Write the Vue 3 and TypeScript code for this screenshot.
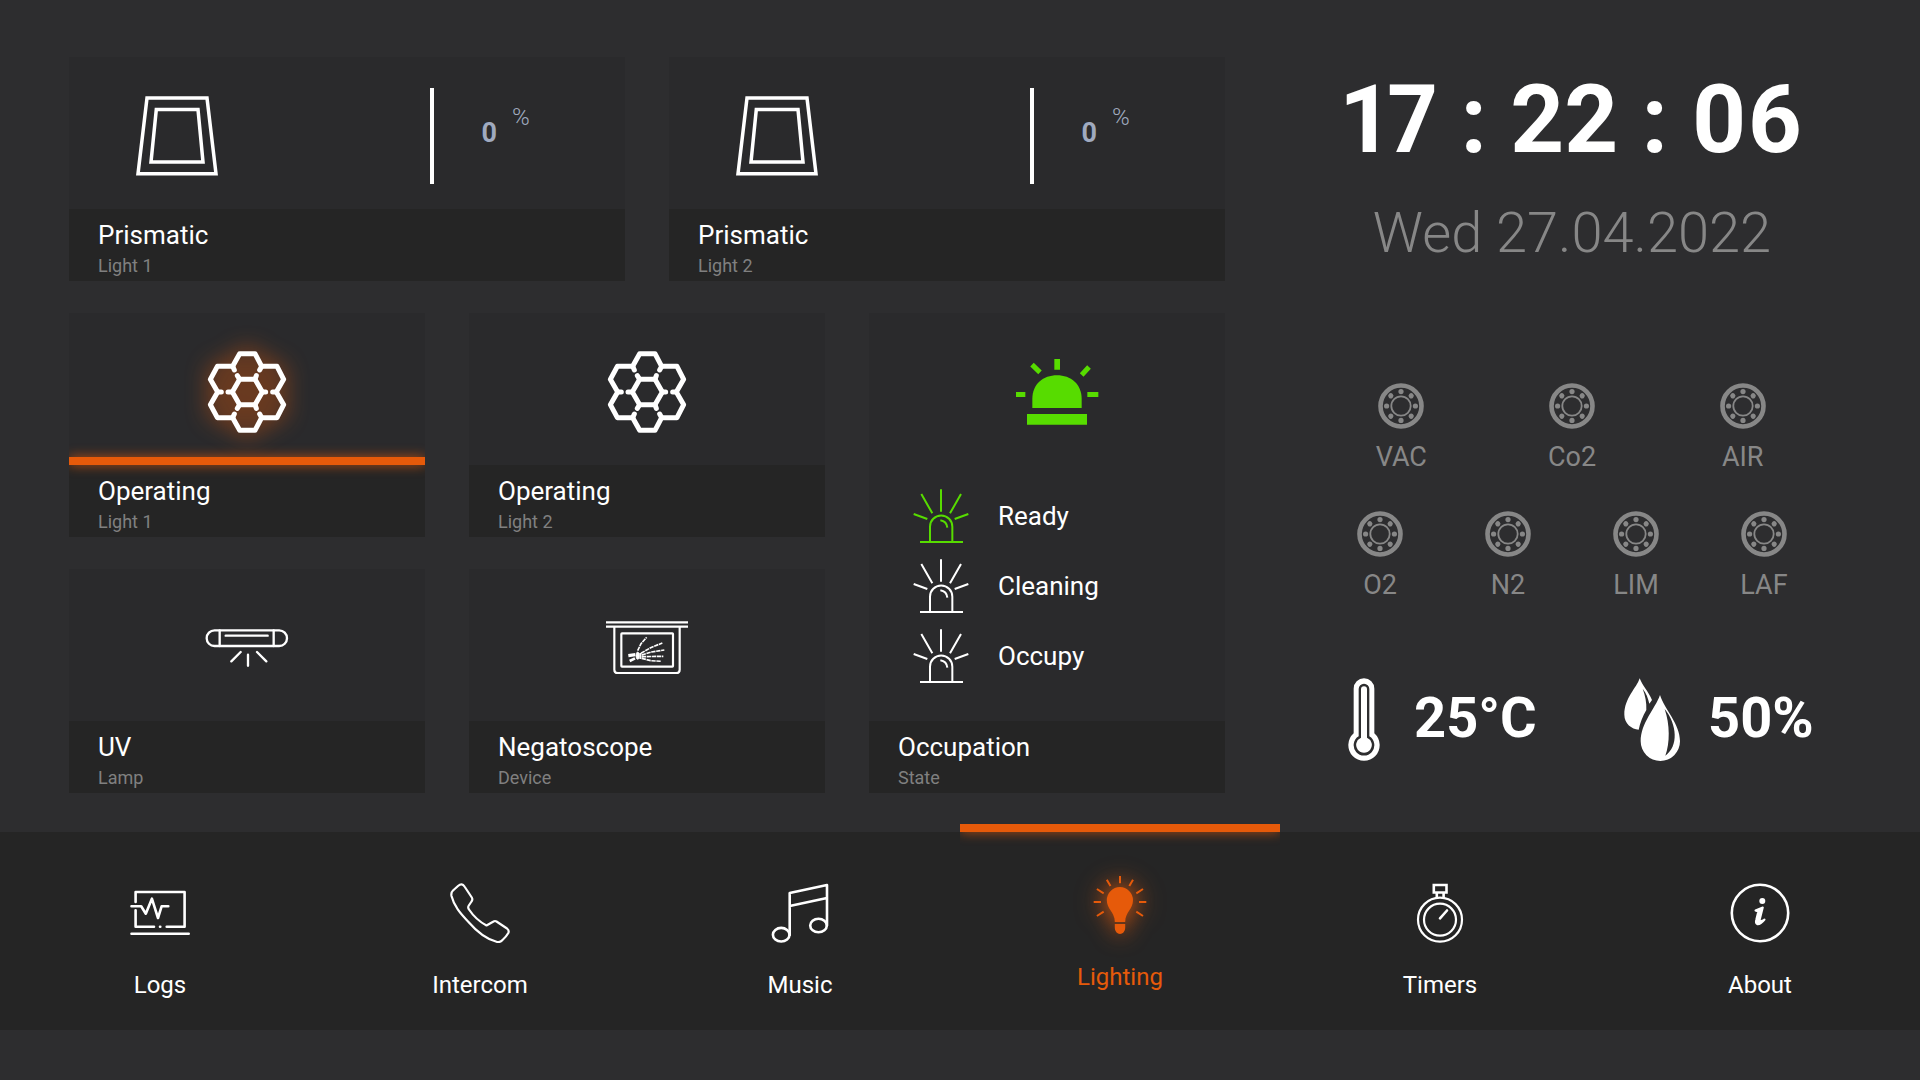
<script setup lang="ts">
import { ref } from 'vue'

interface PrismaticLight {
  name: string
  level: number
}

interface OperatingLight {
  name: string
  on: boolean
}

const prismatic: PrismaticLight[] = [
  { name: 'Light 1', level: 0 },
  { name: 'Light 2', level: 0 },
]

const operating = ref<OperatingLight[]>([
  { name: 'Light 1', on: true },
  { name: 'Light 2', on: false },
])

const states = ['Ready', 'Cleaning', 'Occupy']
const state = ref('Ready')

const gasRows = [
  ['VAC', 'Co2', 'AIR'],
  ['O2', 'N2', 'LIM', 'LAF'],
]
const boltAngles = [0, 45, 90, 135, 180, 225, 270, 315]

const pages = ['Logs', 'Intercom', 'Music', 'Lighting', 'Timers', 'About']
const page = ref('Lighting')
</script>

<template>
  <div class="panel">
    <main class="main">
      <section class="tiles" aria-label="Lighting controls">
        <article v-for="light in prismatic" :key="light.name" class="tile wide">
          <div class="hero dimmer">
            <svg class="icon" viewBox="75 54 84 84" fill="none" stroke="#fff" stroke-width="3.5">
              <path d="M87 58H147L156 133.8H78Z" />
              <path d="M96.3 69.5H138L143 122H91Z" />
            </svg>
            <span class="rail"></span>
            <p class="level"><b>{{ light.level }}</b><span>%</span></p>
          </div>
          <div class="label">
            <h2>Prismatic</h2>
            <p>{{ light.name }}</p>
          </div>
        </article>

        <button
          v-for="light in operating"
          :key="light.name"
          type="button"
          class="tile"
          :class="{ on: light.on }"
          :aria-pressed="light.on"
          @click="light.on = !light.on"
        >
          <span class="hero">
            <svg class="icon" viewBox="435 149 252 252" fill="none" stroke="#fff" stroke-width="15" stroke-linecap="round" stroke-linejoin="round">
              <path d="M539 237H585L607 275L585 313H539L517 275Z" />
              <path d="M518 198H472L451 237L473 275L451 313L472 352H518L539 390H585L605 352H651L671 313L649 275L671 237L651 198H605L585 160H539Z" />
              <path d="M518 198L523 209M605 198L599 209M473 275H484M649 275H638M518 352L523 341M605 352L599 341" />
              <path d="M539 237L532 226M585 237L589 226M517 275H504M607 275H617M539 313L532 324M585 313L589 324" />
            </svg>
          </span>
          <span class="label">
            <strong>Operating</strong>
            <small>{{ light.name }}</small>
          </span>
        </button>

        <article class="tile occupation">
          <div class="hero beacon">
            <svg class="icon" viewBox="465 150 252 252" fill="#57dc00">
              <path d="M517 324V297C517 252 550 226 591 226C632 226 665 252 665 297V324Z" />
              <path d="M501 342H681V374H501ZM583 177H600V209H583ZM468 276H496V291H468ZM682 276H715V291H682Z" />
              <path d="M516 194L540 217M687 201L665 225" stroke="#57dc00" stroke-width="15" />
            </svg>
          </div>
          <div class="states">
            <button
              v-for="item in states"
              :key="item"
              type="button"
              class="state"
              :class="{ current: item === state }"
              :aria-pressed="item === state"
              @click="state = item"
            >
              <svg viewBox="159 564 168 168" fill="none" stroke="currentColor" stroke-width="6">
                <path d="M243 568V635M184 582L217 640M303 582L270 640M161 642L202 657M325 642L284 657" />
                <path d="M210 726V680A33.500 33.500 0 0 1 277 680V726M180 726H309M241 661Q260 664 262 683" />
              </svg>
              <span>{{ item }}</span>
            </button>
          </div>
          <div class="label">
            <h2>Occupation</h2>
            <p>State</p>
          </div>
        </article>

        <button type="button" class="tile">
          <span class="hero">
            <svg class="icon" viewBox="436 138 252 252" fill="none" stroke="#fff" stroke-width="7" stroke-linecap="round">
              <rect x="441" y="211" width="241" height="47" rx="23.500" />
              <path d="M480 211V258M642 211V258M498 227H624M543 276L515 304M565 284V317M592 276L620 304" />
            </svg>
          </span>
          <span class="label">
            <strong>UV</strong>
            <small>Lamp</small>
          </span>
        </button>

        <button type="button" class="tile">
          <span class="hero">
            <svg class="icon" viewBox="435 138 252 252" fill="none" stroke="#fff" stroke-width="6.500">
              <path d="M438 187H684M438 200H684M463 202V329Q463 339 473 339H649Q659 339 659 329V202" />
              <rect x="484" y="220" width="155" height="100" rx="2" />
              <path d="M505 287L526 284" stroke-width="10" />
              <path d="M509 303L525 295" stroke-width="8" />
              <ellipse cx="533" cy="287" rx="5" ry="11" fill="#fff" stroke-width="2" />
              <path d="M541 279V297" stroke-width="6" />
              <path d="M533 272L543 251L560 232M543 280L572 263L607 249M545 285L575 276L613 270M545 290L610 289M545 295L572 302L604 304" stroke-width="5" stroke-dasharray="13 2" />
            </svg>
          </span>
          <span class="label">
            <strong>Negatoscope</strong>
            <small>Device</small>
          </span>
        </button>
      </section>

      <aside class="status">
        <time class="clock">17 : 22 : 06</time>
        <time class="date">Wed 27.04.2022</time>

        <div class="gases">
          <ul v-for="row in gasRows" :key="row[0]">
            <li v-for="gas in row" :key="gas">
              <svg viewBox="-23 -23 46 46" fill="none" stroke="#878787">
                <circle r="20.500" stroke-width="4.600" />
                <circle r="9.700" stroke-width="1.800" />
                <circle
                  v-for="angle in boltAngles"
                  :key="angle"
                  cy="-14.400"
                  r="2.600"
                  fill="#878787"
                  stroke="none"
                  :transform="`rotate(${angle})`"
                />
              </svg>
              <span>{{ gas }}</span>
            </li>
          </ul>
        </div>

        <div class="climate">
          <p class="temperature">
            <svg width="32" height="83" viewBox="84 85 96 249" fill="#fff" fill-rule="evenodd">
              <path d="M101 117A31 31 0 0 1 163 117V251A47 47 0 1 1 101 251ZM116 118A16 16 0 0 1 148 118V260A31 31 0 1 1 116 260ZM123 119A9 9 0 0 1 141 119V264A23.500 23.500 0 1 1 123 264Z" />
            </svg>
            <span>25°C</span>
          </p>
          <p class="humidity">
            <svg width="56" height="83" viewBox="912 85 168 249" fill="#fff" fill-rule="evenodd">
              <path d="M959 86C950 115 913 145 913 195C913 222 935 238 956 240C960 220 968 200 979 181C980 158 976 138 968 117C979 130 984 145 988 162L996 151C985 125 968 110 959 86Z" />
              <path d="M1020 136C1005 178 962 220 962 275A58.500 58.500 0 0 0 1080 275C1080 222 1034 180 1020 136ZM1034 178C1072 225 1076 290 1036 318C1050 280 1050 225 1034 178Z" />
            </svg>
            <span>50%</span>
          </p>
        </div>
      </aside>
    </main>

    <nav class="nav">
      <a
        v-for="item in pages"
        :key="item"
        :href="`#${item.toLowerCase()}`"
        :class="{ active: item === page }"
        :aria-current="item === page ? 'page' : undefined"
        @click.prevent="page = item"
      >
        <svg viewBox="0 0 60 60" fill="none" stroke="currentColor" stroke-width="2.600" stroke-linecap="round" stroke-linejoin="round">
          <template v-if="item === 'Logs'">
            <path d="M5.600 19V9H54.600V43.700H36.700M5.600 27.300V43.700H24M30 43.700H30.300M1.500 50.700H58.700" />
            <path d="M1.500 23.300H11.200L15.800 30.700L21.900 15.700L28 35L31.600 23.300H38.300" />
          </template>
          <path
            v-else-if="item === 'Intercom'"
            stroke-width="2.200"
            d="M8 3Q12 -.5 14.500 3.500L21.800 14.500Q23 16.500 21.500 18.500L18.800 22.500Q17.500 24.500 19 26.500C24 34 29 38.500 36.500 42.500L43.500 38.500Q45 37.500 46.500 38.500L57 45.500Q59.500 47.500 58.300 50Q56 54 52.500 57Q50 59.800 46.500 58.800C36 56 28 50 18.500 39C10 30 4 23 1.500 13Q.8 9.500 3 7.500Z"
          />
          <template v-else-if="item === 'Music'">
            <path d="M19.700 52V10L57 2V42.500M19.700 23L57 15" />
            <ellipse cx="11.200" cy="51.700" rx="8.300" ry="6.800" />
            <ellipse cx="48.500" cy="42.500" rx="8.300" ry="6.800" />
          </template>
          <template v-else-if="item === 'Lighting'">
            <path
              fill="currentColor"
              stroke="none"
              d="M24.800 47C24.800 37 16.800 34 16.800 25.200A13.100 13.100 0 0 1 43 25.200C43 34 35.200 37 35.200 47ZM24.800 49H35.200V53A5.200 6 0 0 1 24.800 53Z"
            />
            <path
              stroke-width="2"
              stroke-linecap="butt"
              d="M30 1V8.300M16.800 4.700L20.500 11M43 4.700L39.300 11M6.900 14L13.700 18.300M53 14L46.300 18.300M3.700 27H11M49 27H56.300M6.900 41L13.700 36.700M53 41L46.300 36.700"
            />
          </template>
          <template v-else-if="item === 'Timers'">
            <circle cx="30" cy="36.700" r="22" stroke-width="2.200" />
            <circle cx="30" cy="36.700" r="16" stroke-width="2.200" />
            <path stroke-linejoin="miter" d="M23.800 2H36.500V9.500H23.800ZM26.800 10V14.500M33.600 10V14.500M30 35.300L37 27.500" />
          </template>
          <template v-else>
            <circle cx="30" cy="30" r="28.200" />
            <circle cx="32.300" cy="18" r="3" fill="currentColor" stroke="none" />
            <path stroke-width="2" fill="currentColor" d="M25.500 27.500L32.800 24.500L29.500 37.500Q30 39 34.500 36.500Q30 42 27 41Q25.300 40 26.300 36.500L28.300 28.500Z" />
          </template>
        </svg>
        <span>{{ item }}</span>
      </a>
    </nav>
  </div>
</template>

<style>
body {
  background: #2d2d2f;
}
</style>

<style scoped>
.panel {
  color: #fff;
  font-family: Roboto, 'Liberation Sans', sans-serif;
}

h2,
p,
ul {
  margin: 0;
  padding: 0;
}

button {
  border: 0;
  padding: 0;
  background: none;
  color: inherit;
  font: inherit;
  text-align: left;
  cursor: pointer;
}

svg {
  display: block;
  flex: none;
}

.main {
  display: grid;
  grid-template-columns: 1156fr 512fr;
  column-gap: 91px;
  padding: 57px 92px 39px 69px;
}

/* Tiles */
.tiles {
  display: grid;
  grid-template-columns: repeat(6, 1fr);
  grid-auto-rows: 224px;
  gap: 32px 44px;
}

.tile {
  grid-column: span 2;
  display: flex;
  flex-direction: column;
  min-width: 0;
  overflow: hidden;
  background: #2a2a2c;
}

.tile.wide {
  grid-column: span 3;
}

.tile.occupation {
  grid-row: span 2;
}

.hero {
  display: flex;
  align-items: center;
  justify-content: center;
  box-sizing: border-box;
  width: 100%;
  height: 152px;
  padding-top: 6px;
}

.icon {
  width: 84px;
  height: 84px;
}

.on .hero {
  position: relative;
}

.on .hero::after {
  content: '';
  position: absolute;
  right: 0;
  bottom: 0;
  left: 0;
  height: 8px;
  background: #e65a0a;
  box-shadow: 0 0 12px rgba(230, 90, 10, 0.8);
}

.on .icon {
  filter: drop-shadow(0 0 11px #e65a0a);
}

.dimmer {
  display: grid;
  grid-template-columns: 65% 4px 1fr;
}

.dimmer .icon {
  margin-left: 66px;
}

.rail {
  height: 96px;
  background: #fff;
}

.level {
  display: flex;
  align-items: flex-start;
  gap: 15px;
  margin: 0 0 18px 47px;
  color: #a0aabf;
}

.level b {
  padding-top: 12px;
  font-size: 27px;
  line-height: 32px;
}

.level span {
  font-size: 24px;
  font-weight: 300;
  line-height: 24px;
}

.label {
  display: flex;
  flex-direction: column;
  gap: 3px;
  box-sizing: border-box;
  width: 100%;
  height: 72px;
  margin-top: auto;
  padding: 10px 29px 0;
  background: #252525;
}

.label h2,
.label strong {
  font-size: 26px;
  font-weight: 400;
  line-height: 32px;
}

.label p,
.label small {
  color: #808080;
  font-size: 18px;
  line-height: 24px;
}

.beacon {
  padding-left: 20px;
}

.states {
  display: flex;
  flex-direction: column;
  margin-top: 16px;
  padding-left: 44px;
}

.state {
  display: flex;
  align-items: center;
  gap: 29px;
  height: 70px;
  font-size: 26px;
  line-height: 32px;
}

.state svg {
  width: 56px;
  height: 56px;
}

.current svg {
  color: #57dc00;
}

/* Status column */
.status {
  display: flex;
  flex-direction: column;
  padding-top: 15px;
}

.clock {
  font-size: 94px;
  font-weight: 700;
  font-variant-numeric: proportional-nums;
  line-height: 96px;
  text-align: center;
  white-space: nowrap;
}

.date {
  margin-top: 33px;
  color: #878787;
  font-size: 56px;
  font-weight: 300;
  line-height: 64px;
  text-align: center;
  white-space: nowrap;
}

.gases {
  display: grid;
  gap: 38px;
  margin-top: 118px;
  color: #878787;
}

.gases ul {
  display: flex;
  list-style: none;
}

.gases li {
  flex: 1;
  display: flex;
  flex-direction: column;
  align-items: center;
  gap: 12px;
  font-size: 27px;
  line-height: 32px;
}

.gases svg {
  width: 46px;
  height: 46px;
}

.climate {
  display: grid;
  grid-template-columns: 276fr 204fr;
  margin-top: 77px;
  padding-left: 32px;
}

.climate p {
  display: flex;
  align-items: center;
  font-size: 56px;
  font-weight: 700;
  line-height: 64px;
}

.climate span {
  padding-bottom: 4px;
}

.temperature {
  gap: 34px;
}

.humidity {
  gap: 28px;
}

/* Page navigation */
.nav {
  display: grid;
  grid-template-columns: repeat(6, 1fr);
  height: 198px;
  background: #252525;
}

.nav a {
  position: relative;
  display: flex;
  flex-direction: column;
  align-items: center;
  gap: 26px;
  padding-top: 51px;
  color: #fff;
  font-size: 24px;
  line-height: 32px;
  text-decoration: none;
}

.nav svg {
  width: 60px;
  height: 60px;
}

.nav .active {
  padding-top: 43px;
  color: #e65a0a;
}

.nav .active::before {
  content: '';
  position: absolute;
  top: -8px;
  right: 0;
  left: 0;
  height: 8px;
  background: #e65a0a;
  box-shadow: 0 0 12px rgba(230, 90, 10, 0.8);
  clip-path: inset(0 0 -20px 0);
}

.nav .active svg {
  filter: drop-shadow(0 0 11px #e65a0a);
}
</style>
